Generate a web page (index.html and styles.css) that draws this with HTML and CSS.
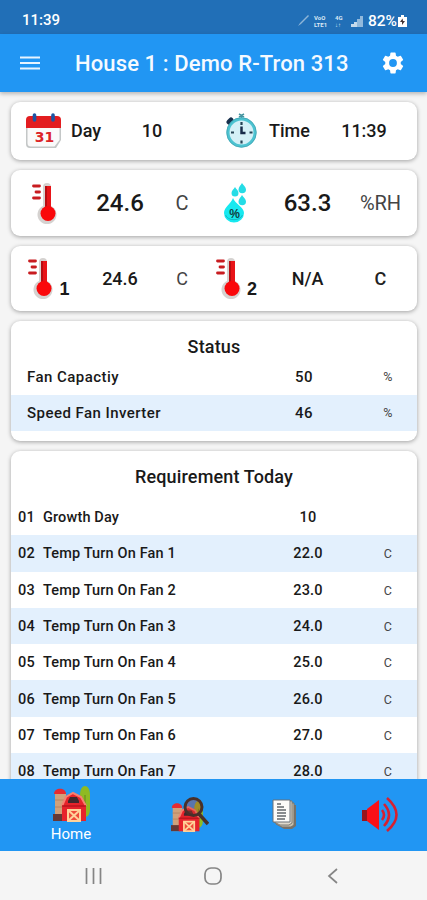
FILE: index.html
```html
<!DOCTYPE html>
<html lang="en">

<head>
    <meta charset="UTF-8">
    <meta name="viewport" content="width=device-width, initial-scale=1.0">
    <title>House 1 : Demo R-Tron 313</title>
    <link rel="stylesheet" href="styles.css">
</head>

<body>
    <!-- Shared icons -->
    <svg class="symbols" width="0" height="0">
        <symbol id="thermometer" viewBox="0 0 28 42">
            <path d="M12 5a4 4 0 0 1 8 0v19a9.500 9.500 0 1 1-8 0z" fill="#d5d2d0"/>
            <path d="M2.500 4h6M5 10h3.500M2.500 16h6" stroke="#c81c20" stroke-width="2.800" stroke-linecap="round"/>
            <path d="M14 4h6v22h-6z" fill="#e81418"/>
            <path d="M14 4h2v22h-2z" fill="#b80d12"/>
            <circle cx="17" cy="31.500" r="7.500" fill="#fa080b"/>
        </symbol>
        <symbol id="barn" viewBox="0 0 38 36">
            <path d="M28 9c0-12 10-12 10 0v14c0 5-2 8-5 8s-5-3-5-8z" fill="#8fba22"/>
            <path d="M33 9v24" stroke="#6f971e" stroke-width="1.500"/>
            <path d="M3 7h11v28H3z" fill="#cfa17b"/>
            <path d="M2 8c0-7 12-7 12 0z" fill="#e52b31"/>
            <path d="M3 14h9M3 21h8" stroke="#b9825f"/>
            <path d="M1 28h10v7H1z" fill="#653936"/>
            <path d="M10 19l4-9 7-3 8 3 5 9v16H10z" fill="#e6232b"/>
            <path d="M10 20l4-9 7-4 8 4 5 9" fill="none" stroke="#f68172" stroke-width="2"/>
            <path d="M16 15l2-4h7l2 4v2H16z" fill="#41272d"/>
            <path d="M10 20h24" stroke="#b9151e" stroke-width="1.500"/>
            <path d="M16 24h12v11H16z" fill="#ef4c3a" stroke="#ffd29a" stroke-width="2"/>
            <path d="M16 24l12 11M28 24L16 35" stroke="#ffd29a" stroke-width="2"/>
        </symbol>
    </svg>

    <!-- Phone status bar -->
    <div class="status-bar">
        <span class="clock">11:39</span>
        <div class="status-icons">
            <svg class="pen" width="13" height="13" viewBox="0 0 13 13"><path d="M1 12l2-3 8-8 1 1-8 8z" fill="#8eb5d8"/></svg>
            <div class="tiny"><span>VoO</span><span>LTE1</span></div>
            <div class="tiny net"><span>4G</span><span>↓↑</span></div>
            <svg class="signal" width="12" height="12" viewBox="0 0 12 12"><path d="M0 9h3v3H0zM3 7h3v5H3z" fill="#c5daec"/><path d="M6 4h3v8H6zM9 1h3v11H9z" fill="#91b9dc"/></svg>
            <span class="battery-text">82%</span>
            <svg width="9" height="12" viewBox="0 0 9 12"><path d="M3 0h3v2h3v10H0V2h3z" fill="#fff"/><path d="M4.500 3.500L2 7h2v3l3-4H5z" fill="#433"/></svg>
        </div>
    </div>

    <!-- App bar -->
    <header class="app-bar">
        <svg class="menu" width="20" height="14" viewBox="0 0 20 14"><path d="M0 1.500h20M0 7h20M0 12.500h20" stroke="#e7f4ff" stroke-width="2.200"/></svg>
        <h1>House 1 : Demo R-Tron 313</h1>
        <svg class="gear" width="26" height="26" viewBox="0 0 24 24"><path fill="#fff" d="M19.140 12.940c.040-.300.060-.610.060-.940s-.020-.640-.070-.940l2.030-1.580a.490.490 0 0 0 .120-.610l-1.920-3.320a.490.490 0 0 0-.590-.220l-2.390.960a7 7 0 0 0-1.620-.940l-.360-2.540a.480.480 0 0 0-.480-.410h-3.840a.470.470 0 0 0-.470.410l-.360 2.540a7.300 7.300 0 0 0-1.620.940l-2.390-.960a.480.480 0 0 0-.590.220L2.740 8.870a.470.470 0 0 0 .120.610l2.030 1.580a6 6 0 0 0 0 1.880l-2.030 1.580a.490.490 0 0 0-.120.610l1.920 3.320c.120.220.370.290.590.220l2.390-.960c.500.380 1.030.700 1.620.940l.360 2.540c.050.240.240.410.480.410h3.840c.240 0 .440-.170.470-.410l.360-2.540a7.300 7.300 0 0 0 1.620-.940l2.390.960c.220.080.470 0 .590-.220l1.920-3.320a.470.470 0 0 0-.120-.610zM12 15.600a3.600 3.600 0 1 1 0-7.200 3.600 3.600 0 0 1 0 7.200z"/></svg>
    </header>

    <main class="content">
        <!-- Day and time -->
        <section class="card day-card">
            <svg class="calendar" width="36" height="36" viewBox="0 0 36 36">
                <path d="M0 9h35v18l-5 8H4q-4 0-4-4z" fill="#c4c7c7"/>
                <path d="M1.500 9h32v18l-5 6.500H5q-3.500 0-3.500-3.500z" fill="#fafafa"/>
                <path d="M0 15V7q0-4 4-4h27q4 0 4 4v8z" fill="#e31d20"/>
                <path d="M8.500 2v5M27 2v5" stroke="#1d55a5" stroke-width="3.600" stroke-linecap="round"/>
                <text x="18.500" y="28.500" class="calendar-text">31</text>
            </svg>
            <span class="label">Day</span>
            <span class="value">10</span>
            <svg class="stopwatch" width="32" height="36" viewBox="0 0 32 36">
                <path d="M13 1l5 3M18 1l-5 3M15.500 3v3" stroke="#45949f" stroke-width="1.500"/>
                <path d="M3 9l2-2" stroke="#17304c" stroke-width="5" stroke-linecap="round"/>
                <circle cx="15.500" cy="19.500" r="13.500" fill="#d4f0f7" stroke="#4dc3d1" stroke-width="3"/>
                <circle cx="15.500" cy="19.500" r="14.800" fill="none" stroke="#3c9fae" stroke-width=".700"/>
                <path d="M15.500 9v3M15.500 27.500v3M5 19.500h3M23.500 19.500h3" stroke="#244254" stroke-width="2.200"/>
                <path d="M15.500 13.500V20h4" fill="none" stroke="#172b49" stroke-width="2.500"/>
            </svg>
            <span class="label">Time</span>
            <span class="value">11:39</span>
        </section>

        <!-- Average temperature and humidity -->
        <section class="card sensor-card large">
            <svg class="thermo" width="28" height="42"><use href="#thermometer"/></svg>
            <span class="value">24.6</span>
            <span class="unit">C</span>
            <svg class="humidity" width="24" height="42" viewBox="0 0 24 42">
                <path d="M18 1c1 2 4 4 4 6.500a3.700 3.700 0 0 1-7.500 0C14.500 5 17 3 18 1zM11 5c1 2 3.500 3.500 3.500 6a3.500 3.500 0 0 1-7 0C7.500 8.500 10 7 11 5zM18 13c1 2 4 4 4 6.500a3.700 3.700 0 0 1-7.500 0c0-2.500 2.500-4.500 3.500-6.500z" fill="#25dce6"/>
                <path d="M9 16c2 6 11 9 11 15a10 9.500 0 0 1-20 0c0-6 7-9 9-15z" fill="#16e9f0"/>
                <path d="M1.500 33a9 7 0 0 0 17 0" fill="none" stroke="#13b9c7"/>
                <text x="10.500" y="36" class="percent-text">%</text>
            </svg>
            <span class="value">63.3</span>
            <span class="unit">%RH</span>
        </section>

        <!-- Individual sensors -->
        <section class="card sensor-card">
            <div class="probe"><svg width="28" height="42"><use href="#thermometer"/></svg><b>1</b></div>
            <span class="value">24.6</span>
            <span class="unit">C</span>
            <div class="probe"><svg width="28" height="42"><use href="#thermometer"/></svg><b>2</b></div>
            <span class="value">N/A</span>
            <span class="unit dark">C</span>
        </section>

        <section class="card status-card">
            <h2>Status</h2>
            <div class="row"><span class="name">Fan Capactiy</span><span class="num">50</span><span class="row-unit">%</span></div>
            <div class="row"><span class="name">Speed Fan Inverter</span><span class="num">46</span><span class="row-unit">%</span></div>
        </section>

        <section class="card requirement-card">
            <h2>Requirement Today</h2>
            <div class="row"><span class="no">01</span><span class="name">Growth Day</span><span class="num">10</span><span class="row-unit"></span></div>
            <div class="row"><span class="no">02</span><span class="name">Temp Turn On Fan 1</span><span class="num">22.0</span><span class="row-unit">C</span></div>
            <div class="row"><span class="no">03</span><span class="name">Temp Turn On Fan 2</span><span class="num">23.0</span><span class="row-unit">C</span></div>
            <div class="row"><span class="no">04</span><span class="name">Temp Turn On Fan 3</span><span class="num">24.0</span><span class="row-unit">C</span></div>
            <div class="row"><span class="no">05</span><span class="name">Temp Turn On Fan 4</span><span class="num">25.0</span><span class="row-unit">C</span></div>
            <div class="row"><span class="no">06</span><span class="name">Temp Turn On Fan 5</span><span class="num">26.0</span><span class="row-unit">C</span></div>
            <div class="row"><span class="no">07</span><span class="name">Temp Turn On Fan 6</span><span class="num">27.0</span><span class="row-unit">C</span></div>
            <div class="row"><span class="no">08</span><span class="name">Temp Turn On Fan 7</span><span class="num">28.0</span><span class="row-unit">C</span></div>
        </section>
    </main>

    <!-- Bottom navigation -->
    <nav class="tabs">
        <a class="tab active">
            <svg width="38" height="36"><use href="#barn"/></svg>
            <span>Home</span>
        </a>
        <a class="tab">
            <svg width="39" height="36" viewBox="0 0 39 36">
                <use href="#barn" x="0" y="4" width="33" height="31"/>
                <circle cx="23.500" cy="10" r="8.500" fill="#c33a2e" fill-opacity=".350" stroke="#49302a" stroke-width="3"/>
                <path d="M29 17l9 10" stroke="#49302a" stroke-width="3.500"/>
            </svg>
        </a>
        <a class="tab">
            <svg width="26" height="32" viewBox="0 0 26 32">
                <path d="M6 6h18v21l-4 3h-8l-8-5z" fill="#77736b"/>
                <path d="M4 4h18v22l-3 2h-9l-6-3z" fill="#c5bdab" stroke="#77736b"/>
                <path d="M2 2h18v22l-3 2H8l-6-3z" fill="#e0dacc" stroke="#7d7b75"/>
                <path d="M1 1h17v22H1z" fill="#fcfcf9" stroke="#6b7077"/>
                <path d="M5 5h4M5 8h7M5 11h9M5 14h9M5 17h9M5 20h8" stroke="#62676b" stroke-width="1.500"/>
            </svg>
        </a>
        <a class="tab">
            <svg width="38" height="36" viewBox="0 0 38 36">
                <path d="M1 13h7v11H1z" fill="#97151d"/>
                <path d="M6 12L18 3v30L6 24z" fill="#fa1118"/>
                <path d="M21 13q4 5 0 10M23 7q10 11 0 22M26 1q19 17 0 33" fill="none" stroke="#d7202f" stroke-width="2.600"/>
            </svg>
        </a>
    </nav>

    <!-- Android buttons -->
    <footer class="system-bar">
        <svg width="17" height="16" viewBox="0 0 17 16"><path d="M1.500 0v16M8.500 0v16M15.500 0v16" stroke="#858585" stroke-width="1.700"/></svg>
        <svg width="18" height="18" viewBox="0 0 18 18"><rect x="1" y="1" width="16" height="16" rx="6" fill="none" stroke="#858585" stroke-width="1.700"/></svg>
        <svg width="18" height="16" viewBox="0 0 18 16"><path d="M13 1L5 8l8 7" fill="none" stroke="#858585" stroke-width="1.700"/></svg>
    </footer>
</body>

</html>
```

FILE: styles.css
```css
* {
    box-sizing: border-box;
}

body {
    display: flex;
    flex-direction: column;
    height: 900px;
    margin: 0;
    overflow: hidden;
    font-family: Roboto, "Liberation Sans", sans-serif;
    font-weight: 500;
    color: #191919;
    background-color: #f5f5f5;
}

svg {
    display: block;
    flex-shrink: 0;
}

.symbols {
    position: absolute;
}

/* Phone status bar */
.status-bar {
    display: flex;
    justify-content: space-between;
    height: 34px;
    padding: 7px 20px 0 22px;
    background-color: #216fb7;
    color: #fff;
    flex-shrink: 0;
}

.clock {
    font-size: 15px;
    line-height: 27px;
}

.status-icons {
    display: flex;
    align-items: center;
    height: 27px;
}

.tiny {
    display: flex;
    flex-direction: column;
    margin-left: 4px;
    width: 17px;
    font-size: 6px;
    font-weight: 700;
    line-height: 7px;
    color: #d9e8f5;
}

.net {
    width: 10px;
}

.signal {
    margin-left: 6px;
}

.battery-text {
    margin: 0 1px 0 5px;
    font-size: 15.5px;
}

/* App bar */
.app-bar {
    display: flex;
    align-items: center;
    height: 58px;
    padding: 0 21px 0 20px;
    background-color: #2196f3;
    box-shadow: 0 2px 4px rgba(0, 0, 0, 0.25);
    z-index: 1;
    flex-shrink: 0;
}

.app-bar h1 {
    flex: 1;
    margin: 0 0 0 35px;
    font-size: 22px;
    font-weight: 500;
    letter-spacing: 0.12px;
    white-space: nowrap;
    color: #f5faff;
}

/* Cards */
.content {
    display: flex;
    flex-direction: column;
    gap: 10px;
    height: 687px;
    padding: 10px 10px 0 11px;
    overflow: hidden;
}

.card {
    flex-shrink: 0;
    background-color: #fff;
    border-radius: 9px;
    box-shadow: 0 1px 4px rgba(0, 0, 0, 0.35);
}

.day-card {
    display: grid;
    grid-template-columns: 45px 40px 82px 33px 43px 50px 90px;
    align-items: center;
    height: 58px;
    padding: 0 0 1px 15px;
    font-size: 18px;
}

.stopwatch {
    grid-column: 5;
}

.value,
.unit {
    text-align: center;
}

.calendar-text {
    font: 700 14px "DejaVu Sans", sans-serif;
    text-anchor: middle;
    fill: #dc2427;
}

.percent-text {
    font: 700 12px "Liberation Sans", sans-serif;
    text-anchor: middle;
    fill: #123d42;
}

.sensor-card {
    display: grid;
    grid-template-columns: 71px 76px 48px 56px 91px 55px;
    align-items: center;
    justify-items: center;
    height: 65px;
    padding-bottom: 1px;
    font-size: 18px;
}

.large {
    height: 66px;
    font-size: 24px;
}

.thermo {
    margin-right: 4px;
}

.humidity {
    margin-left: 3px;
}

.unit {
    font-size: 18px;
    font-weight: 400;
    color: #444;
}

.large .unit {
    font-size: 20px;
}

.dark {
    font-weight: 500;
    color: #222;
}

.probe {
    display: flex;
    align-items: flex-end;
    gap: 4px;
    padding-left: 4px;
}

.probe b {
    font: 700 18px/20px "Liberation Sans", sans-serif;
}

/* Tables */
h2 {
    margin: 0;
    font-size: 18px;
    font-weight: 500;
    text-align: center;
    letter-spacing: 0.15px;
}

.row {
    display: flex;
    align-items: center;
    height: 36.3px;
    font-size: 14.5px;
    letter-spacing: 0.15px;
}

.row:nth-of-type(even) {
    background-color: #e3f0fd;
}

.name {
    flex: 1;
}

.num {
    width: 102px;
    text-align: center;
}

.row-unit {
    width: 58px;
    font-size: 12.5px;
    font-weight: 400;
    text-align: center;
    color: #444;
}

.status-card {
    height: 120px;
}

.status-card h2 {
    height: 37.5px;
    padding-top: 15px;
    line-height: 22px;
}

.status-card .row {
    padding-left: 16px;
    font-size: 15px;
    letter-spacing: 0.45px;
}

.status-card .num {
    width: 110px;
}

.requirement-card h2 {
    height: 48px;
    padding-top: 15px;
    line-height: 22px;
}

.requirement-card .row {
    padding-top: 1px;
}

.no {
    width: 25px;
    margin-left: 7px;
}

/* Bottom navigation */
.tabs {
    display: flex;
    height: 72px;
    padding-left: 10px;
    background-color: #2196f3;
    flex-shrink: 0;
}

.tab {
    display: flex;
    flex-direction: column;
    align-items: center;
    justify-content: center;
    width: 95px;
    color: #fff;
    font-size: 15px;
    font-weight: 400;
}

.active {
    width: 122px;
    margin-right: 10px;
}

.active span {
    padding-top: 2px;
    line-height: 20px;
}

/* Android buttons */
.system-bar {
    display: flex;
    align-items: center;
    height: 49px;
    padding-left: 85px;
    gap: 102px;
    background-color: #f5f5f5;
}
```
